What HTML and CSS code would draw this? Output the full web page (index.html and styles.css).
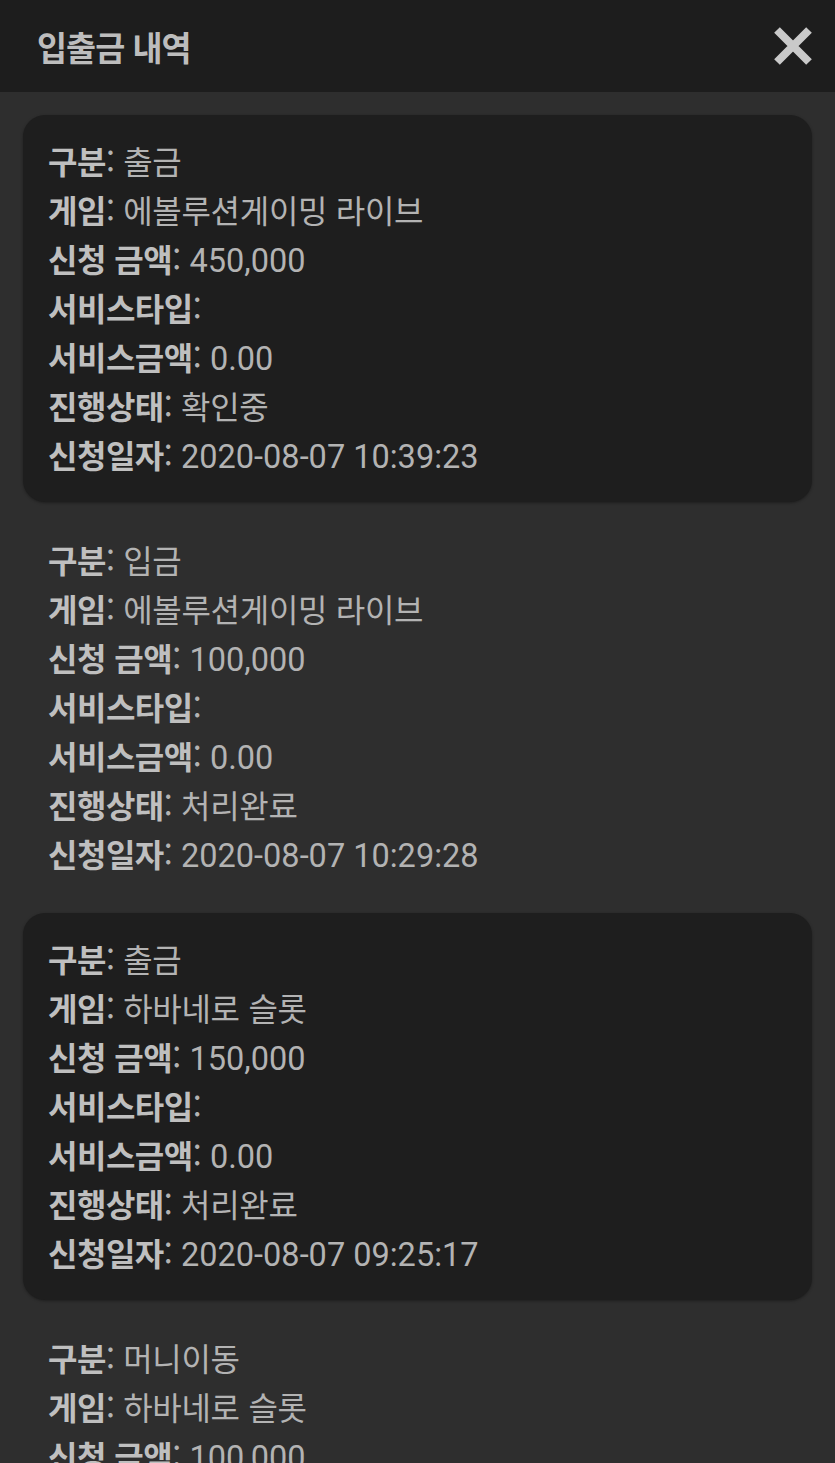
FILE: index.html
```html
<!DOCTYPE html>
<html lang="ko">
<head>
<meta charset="utf-8">
<title>입출금 내역</title>
<link rel="stylesheet" href="styles.css">
</head>
<body>
<header class="topbar">
  <h1 class="title">입출금 내역</h1>
  <button class="close" aria-label="닫기">
    <svg width="42" height="42" viewBox="0 0 42 42"><path d="M5 5 L37 37 M37 5 L5 37" stroke="#c9c9c9" stroke-width="8" stroke-linecap="butt"/></svg>
  </button>
</header>
<main class="list">
  <section class="item alt">
    <p><b>구분</b>: 출금</p>
    <p><b>게임</b>: 에볼루션게이밍 라이브</p>
    <p><b>신청 금액</b>: <span class="num">450,000</span></p>
    <p><b>서비스타입</b>:</p>
    <p><b>서비스금액</b>: <span class="num">0.00</span></p>
    <p><b>진행상태</b>: 확인중</p>
    <p><b>신청일자</b>: <span class="num">2020-08-07 10:39:23</span></p>
  </section>
  <section class="item">
    <p><b>구분</b>: 입금</p>
    <p><b>게임</b>: 에볼루션게이밍 라이브</p>
    <p><b>신청 금액</b>: <span class="num">100,000</span></p>
    <p><b>서비스타입</b>:</p>
    <p><b>서비스금액</b>: <span class="num">0.00</span></p>
    <p><b>진행상태</b>: 처리완료</p>
    <p><b>신청일자</b>: <span class="num">2020-08-07 10:29:28</span></p>
  </section>
  <section class="item alt">
    <p><b>구분</b>: 출금</p>
    <p><b>게임</b>: 하바네로 슬롯</p>
    <p><b>신청 금액</b>: <span class="num">150,000</span></p>
    <p><b>서비스타입</b>:</p>
    <p><b>서비스금액</b>: <span class="num">0.00</span></p>
    <p><b>진행상태</b>: 처리완료</p>
    <p><b>신청일자</b>: <span class="num">2020-08-07 09:25:17</span></p>
  </section>
  <section class="item">
    <p><b>구분</b>: 머니이동</p>
    <p><b>게임</b>: 하바네로 슬롯</p>
    <p><b>신청 금액</b>: <span class="num">100,000</span></p>
  </section>
</main>
</body>
</html>
```
FILE: styles.css
```css
html, body {
  margin: 0;
  padding: 0;
  background: #2e2e2e;
}
body {
  font-family: Roboto, "Noto Sans CJK KR", sans-serif;
  color: #b3b3b3;
  height: 1463px;
  overflow: hidden;
}
.topbar {
  height: 92px;
  background: #1d1d1d;
  display: flex;
  align-items: center;
  justify-content: space-between;
  padding: 0 21px 0 37px;
  box-sizing: border-box;
}
.title {
  margin: 0;
  font-family: "Noto Sans CJK KR", sans-serif;
  font-size: 34px;
  font-weight: 700;
  color: #bdbdbd;
  letter-spacing: -1px;
  transform: scaleX(0.96);
  transform-origin: left center;
}
.close {
  background: none;
  border: 0;
  padding: 0;
  width: 42px;
  height: 42px;
  display: flex;
}
.list {
  padding: 23px 23px 0;
  display: flex;
  flex-direction: column;
  gap: 12px;
}
.item {
  padding: 21px 25px 23px;
  border-radius: 22px;
}
.item.alt {
  background: #1e1e1e;
  box-shadow: 0 1px 3px rgba(0, 0, 0, 0.35);
}
.item p {
  margin: 0;
  font-size: 32px;
  line-height: 49px;
  height: 49px;
  white-space: nowrap;
  font-family: "Noto Sans CJK KR", sans-serif;
  font-weight: 400;
  letter-spacing: -0.3px;
}
.item b {
  font-weight: 700;
  color: #bfbfbf;
  letter-spacing: -0.5px;
}
.num {
  font-family: Roboto, sans-serif;
  font-size: 32.5px;
  letter-spacing: 0;
}
```
